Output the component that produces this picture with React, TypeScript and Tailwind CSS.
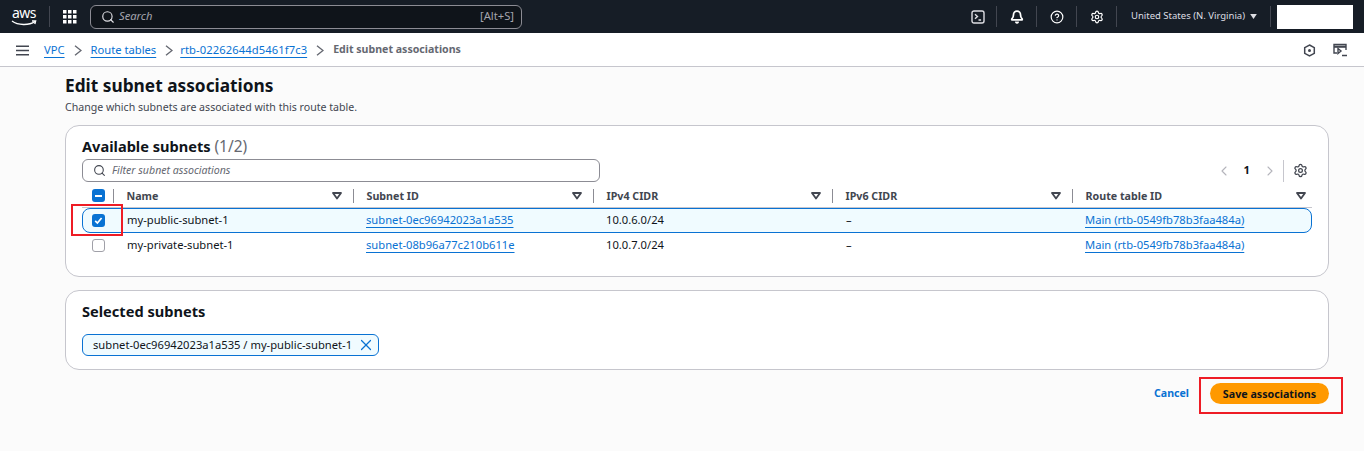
import { Bell, ChevronLeft, ChevronRight, CircleHelp, Search, Settings, X } from "lucide-react";

const font = "font-['Noto_Sans',sans-serif]";
const link = "text-[#0972d3] underline decoration-[#0972d3] underline-offset-[3px]";
const cols = "grid grid-cols-[31px_240px_240px_239px_240px_1fr]";

function AwsLogo() {
  return (
    <span className="relative flex h-[24px] w-[26px] flex-col items-center">
      <span className="text-[14px] leading-[15px] tracking-[-0.5px] text-white">aws</span>
      <svg width="26" height="7" viewBox="0 0 26 7" fill="none" stroke="#fff" strokeWidth="1.4" aria-hidden>
        <path d="M1 1c6 4.5 17 4.5 23 .6" />
        <path d="M21 1h3.6l-.8 3" />
      </svg>
    </span>
  );
}

function GridIcon() {
  return (
    <svg width="14" height="14" viewBox="0 0 14 14" fill="#fff" aria-hidden>
      {[0, 5, 10].map((y) =>
        [0, 5, 10].map((x) => <rect key={`${x}-${y}`} x={x} y={y} width="3.5" height="3.5" />)
      )}
    </svg>
  );
}

function FilterCaret() {
  return (
    <svg width="10" height="8" viewBox="0 0 10 8" fill="none" stroke="#424650" strokeWidth="1.8" aria-hidden>
      <path d="M1 1h8L5 6.6z" strokeLinejoin="round" />
    </svg>
  );
}

function Crumb({ className = "mx-[9px]" }: { className?: string }) {
  return (
    <svg width="8" height="11" viewBox="0 0 8 11" fill="none" stroke="#656871" strokeWidth="1.4" className={className} aria-hidden>
      <path d="M1 .8l6 4.700-6 4.700" />
    </svg>
  );
}

function Divider() {
  return <span className="h-[21px] w-px bg-[#424650]" />;
}

function HeadCell({ label, last }: { label: string; last?: boolean }) {
  return (
    <div className="flex h-[23px] items-center">
      <span className="h-[14px] w-px bg-[#8c8c94]" />
      <span className="ml-[12.5px] flex-1 pt-[2px] text-[10.7px] font-bold text-[#424650]">{label}</span>
      <span className={last ? "mr-[6px]" : "mr-[11px]"}>
        <FilterCaret />
      </span>
    </div>
  );
}

function Row({
  name,
  subnet,
  cidr,
  selected,
}: {
  name: string;
  subnet: string;
  cidr: string;
  selected?: boolean;
}) {
  const cell = "flex items-center pl-[12px]";
  return (
    <div
      className={`${cols} h-[25px] items-stretch rounded-[8px] border text-[11.2px] text-[#0f141a] ${
        selected ? "border-[#0972d3] bg-[#f0fbff]" : "border-transparent"
      }`}
    >
      <div className="flex items-center pl-[9px]">
        {selected ? (
          <span className="flex h-[13px] w-[13px] items-center justify-center rounded-[3px] bg-[#0972d3]">
            <svg width="9" height="9" viewBox="0 0 9 9" fill="none" stroke="#fff" strokeWidth="1.7" aria-hidden>
              <path d="M1.2 4.8l2.2 2.2 4.2-5" />
            </svg>
          </span>
        ) : (
          <span className="h-[13px] w-[13px] rounded-[3px] border border-[#a0a0a8] bg-white" />
        )}
      </div>
      <div className={`${cell} pl-[13px]`}>{name}</div>
      <div className={cell}>
        <span className={link}>{subnet}</span>
      </div>
      <div className={cell}>{cidr}</div>
      <div className={`${cell} pl-[13px]`}>–</div>
      <div className={cell}>
        <span className={link}>Main (rtb-0549fb78b3faa484a)</span>
      </div>
    </div>
  );
}

export default function App() {
  return (
    <div className={`${font} flex h-[451px] w-[1364px] flex-col overflow-hidden bg-[#fbfbfb]`}>
      <header className="flex h-[33px] shrink-0 items-center bg-[#161d26] pl-[11px] text-white">
        <AwsLogo />
        <span className="ml-[12px] h-[21px] w-px bg-[#424650]" />
        <span className="ml-[13px]">
          <GridIcon />
        </span>
        <div className="ml-[13px] flex h-[24px] w-[432px] items-center rounded-[6px] border border-[#8c8c94] bg-[#0f141a] pl-[10px] pr-[7px]">
          <Search size={14} strokeWidth={2} className="text-[#dedee3]" />
          <span className="ml-[4px] flex-1 text-[11.2px] italic text-[#a4a4ad]">Search</span>
          <span className="text-[11.2px] text-[#a4a4ad]">[Alt+S]</span>
        </div>
        <div className="ml-auto flex items-center">
          <span className="flex w-[36px] justify-center">
            <svg width="14" height="14" viewBox="0 0 14 14" fill="none" stroke="#dedee3" strokeWidth="1.4" aria-hidden>
              <rect x="1" y="1" width="12" height="12" rx="2" />
              <path d="M4 4.2l2.5 2.3L4 8.8M7.5 10h2.600" />
            </svg>
          </span>
          <Divider />
          <span className="flex w-[39px] justify-center">
            <Bell size={14} strokeWidth={3} />
          </span>
          <Divider />
          <span className="flex w-[39px] justify-center">
            <CircleHelp size={14} strokeWidth={2} />
          </span>
          <Divider />
          <span className="flex w-[39px] justify-center">
            <Settings size={14} strokeWidth={2} />
          </span>
          <Divider />
          <span className="ml-[14px] w-[114px] whitespace-nowrap text-[9.5px] text-[#dedee3]">United States (N. Virginia)</span>
          <svg width="7" height="5" viewBox="0 0 8 6" fill="#dedee3" className="ml-[5px]" aria-hidden>
            <path d="M0 0h8L4 6z" />
          </svg>
          <span className="ml-[13px] h-[21px] w-px bg-[#424650]" />
          <span className="ml-[6px] mr-[11px] h-[24px] w-[76px] bg-white" />
        </div>
      </header>

      <nav className="flex h-[34px] shrink-0 items-center border-b border-[#c6c6cd] bg-white pl-[16px] pt-[1px] text-[11.2px]">
        <svg width="13" height="11" viewBox="0 0 13 11" stroke="#424650" strokeWidth="1.6" aria-hidden>
          <path d="M0 1.2h13M0 5.5h13M0 9.8h13" />
        </svg>
        <span className={`${link} ml-[15px]`}>VPC</span>
        <Crumb />
        <span className={link}>Route tables</span>
        <Crumb className="ml-[9px] mr-[7px]" />
        <span className={`${link} tracking-[0.1px]`}>rtb-02262644d5461f7c3</span>
        <Crumb />
        <span className="text-[10.6px] font-bold text-[#656871]">Edit subnet associations</span>
        <div className="ml-auto mr-[17px] flex items-center gap-[17px]">
          <svg width="13" height="13" viewBox="0 0 13 13" fill="none" stroke="#424650" strokeWidth="1.5" aria-hidden>
            <path d="M6.5 1l4.8 2.7v5.6L6.500 12 1.700 9.300V3.700z" />
            <circle cx="6.500" cy="6.500" r="1.500" fill="#424650" stroke="none" />
          </svg>
          <svg width="14" height="14" viewBox="0 0 14 14" fill="none" stroke="#424650" strokeWidth="1.4" aria-hidden>
            <path d="M4 10H1V1.500h12V7" />
            <path d="M1 3.700h12" strokeWidth="2.200" />
            <path d="M5 5.500l3 2.500-3 2.500zM9 12.500h5" />
          </svg>
        </div>
      </nav>

      <main className="flex-1 pl-[65px] pr-[35px]">
        <h1 className="mt-[7px] text-[17.3px] font-bold leading-[24px] text-[#0f141a]">Edit subnet associations</h1>
        <p className="mt-[2px] text-[10.6px] leading-[15px] text-[#424650]">
          Change which subnets are associated with this route table.
        </p>

        <section className="relative mt-[10px] h-[152px] rounded-[14px] border border-[#c6c6cd] bg-white px-[16px] pt-[10px]">
          <h2 className="text-[14.6px] font-bold leading-[21px] text-[#0f141a]">
            Available subnets <span className="text-[15.5px] font-normal text-[#656871]">(1/2)</span>
          </h2>
          <div className="mt-[2px] flex items-center">
            <div className="flex h-[23px] w-[518px] items-center rounded-[6px] border border-[#8c8c94] bg-white pl-[10px]">
              <Search size={13} strokeWidth={2} className="text-[#424650]" />
              <span className="ml-[6px] text-[10.6px] italic text-[#656871]">Filter subnet associations</span>
            </div>
            <div className="ml-auto mr-[4px] flex items-center">
              <ChevronLeft size={16} strokeWidth={1.6} className="text-[#b4b4bb]" />
              <span className="mx-[12px] text-[11.2px] font-bold text-[#0f141a]">1</span>
              <ChevronRight size={16} strokeWidth={1.6} className="text-[#b4b4bb]" />
              <span className="ml-[5px] mr-[9px] h-[22px] w-px bg-[#c6c6cd]" />
              <Settings size={15} strokeWidth={2} className="text-[#424650]" />
            </div>
          </div>
          <div className={`${cols} mt-[2px] border-b border-[#c6c6cd]`}>
            <div className="flex h-[23px] items-center pl-[10px]">
              <span className="flex h-[13px] w-[13px] items-center justify-center rounded-[3px] bg-[#0972d3]">
                <span className="h-[2px] w-[7px] bg-white" />
              </span>
            </div>
            <HeadCell label="Name" />
            <HeadCell label="Subnet ID" />
            <HeadCell label="IPv4 CIDR" />
            <HeadCell label="IPv6 CIDR" />
            <HeadCell label="Route table ID" last />
          </div>
          <Row name="my-public-subnet-1" subnet="subnet-0ec96942023a1a535" cidr="10.0.6.0/24" selected />
          <Row name="my-private-subnet-1" subnet="subnet-08b96a77c210b611e" cidr="10.0.7.0/24" />
          <span className="absolute left-[5px] top-[78px] h-[32px] w-[52px] border-2 border-[#ee1c25]" />
        </section>

        <section className="mt-[13px] h-[80px] rounded-[14px] border border-[#c6c6cd] bg-white px-[16px] pt-[10px]">
          <h2 className="text-[14.6px] font-bold leading-[21px] text-[#0f141a]">Selected subnets</h2>
          <span className="mt-[12px] inline-flex h-[22px] items-center rounded-[6px] border border-[#0972d3] bg-[#f0fbff] pl-[10px] pr-[3px] text-[11.2px] text-[#0f141a]">
            subnet-0ec96942023a1a535 / my-public-subnet-1
            <X size={18} strokeWidth={1.6} className="ml-[5px] text-[#0972d3]" />
          </span>
        </section>

        <div className="mt-[13px] flex items-center justify-end">
          <span className="text-[10.6px] font-bold text-[#0972d3]">Cancel</span>
          <span className="relative ml-[21px] flex h-[21px] w-[119px] items-center justify-center rounded-full bg-[#ff9900] pt-[1px] text-[10.7px] font-bold text-[#0f141a]">
            Save associations
            <span className="absolute -left-[11px] -top-[6px] h-[37px] w-[144px] border-2 border-[#ee1c25]" />
          </span>
        </div>
      </main>
    </div>
  );
}
